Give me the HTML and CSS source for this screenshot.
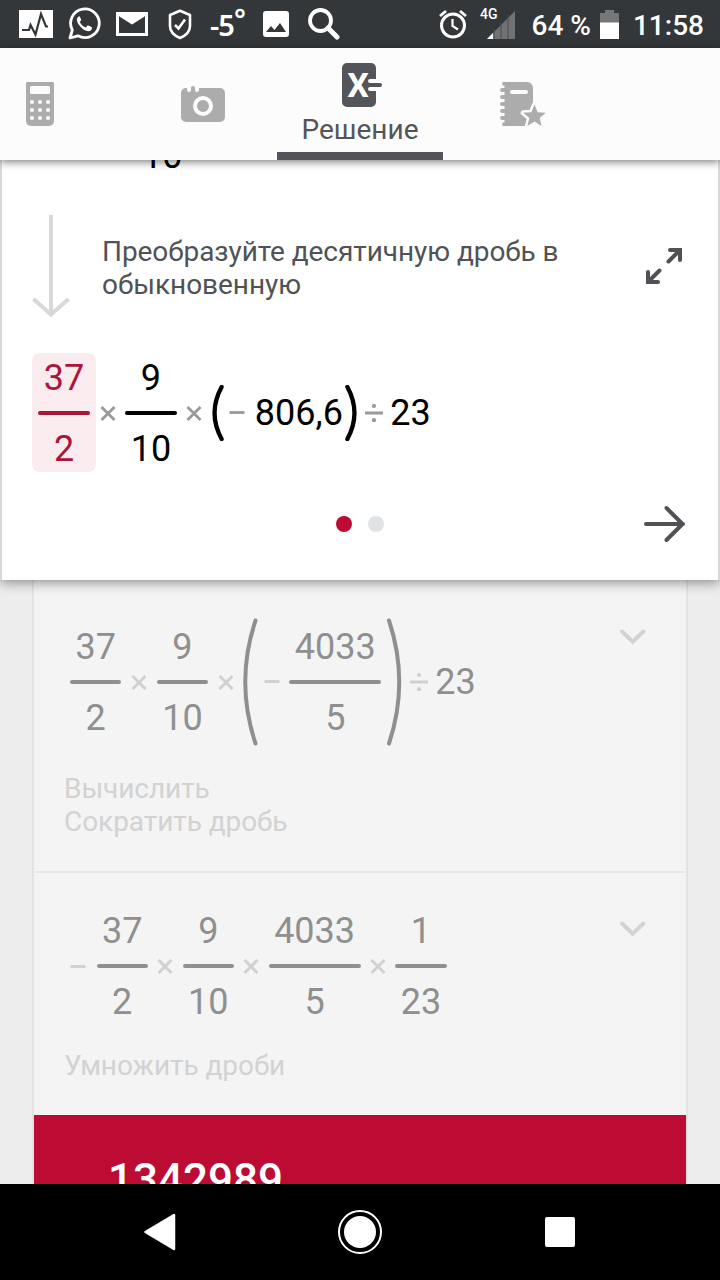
FILE: index.html
```
<!DOCTYPE html>
<html lang="ru">
<head>
  <meta charset="UTF-8">
  <meta name="viewport" content="width=device-width, initial-scale=1.0">
  <title>Решение</title>
  <link rel="stylesheet" href="styles.css">
</head>
<body>
  <!-- Shared math signs -->
  <svg class="defs" width="0" height="0">
    <symbol id="times" viewBox="0 0 16 16"><path d="M1.5 1l13 13M14.5 1l-13 13" stroke="currentColor" stroke-width="2.8"/></symbol>
    <symbol id="minus" viewBox="0 0 16 16"><path d="M.5 7.5h15" stroke="currentColor" stroke-width="2.8"/></symbol>
    <symbol id="divide" viewBox="0 0 18 18"><path d="M0 9h18" stroke="currentColor" stroke-width="3"/><circle cx="9" cy="2" r="2.1" fill="currentColor"/><circle cx="9" cy="16.2" r="2.1" fill="currentColor"/></symbol>
    <symbol id="chevron" viewBox="0 0 26 16"><path d="M2 2.5l10.7 10.3L23.4 2.5" fill="none" stroke="currentColor" stroke-width="4" stroke-linecap="round"/></symbol>
  </svg>

  <div class="status-bar">
    <div class="status-left">
      <svg width="34" height="28" viewBox="0 0 34 28"><path fill="#fff" d="M0 0h34v28H0z"/><path d="M3 20h7l1.500-5 5 9.500L22 4l5 12.500h2" fill="none" stroke="#343739" stroke-width="2.200"/></svg>
      <svg class="icon-phone" width="34" height="34" viewBox="0 0 34 34"><path d="M3 31l2.300-8A14.300 14.300 0 1 1 11 28.800z" fill="none" stroke="#fff" stroke-width="2.800" stroke-linejoin="round"/><path d="M11.500 9.500c-2 1.500-2.500 4.500 1 9 4 5 8.500 7 11.500 4.700 1.300-1.300 1-3 .5-3.200l-3.700-1.800-2 2.300c-3-1.200-4.800-3-6-5.600l1.500-2-1.500-3.400z" fill="#fff"/></svg>
      <svg class="icon-mail" width="32" height="24" viewBox="0 0 32 24"><path d="M1.500 1.500h29v21h-29z" fill="none" stroke="#fff" stroke-width="3"/><path d="M1 0h30v3L16 12.500 1 3z" fill="#fff"/></svg>
      <svg class="icon-shield" width="24" height="31" viewBox="0 0 24 31"><path d="M12 1.800L22 6v11c0 6-4 9.500-10 12C6 26.500 2 23 2 17V6z" fill="none" stroke="#fff" stroke-width="2.600" stroke-linejoin="round"/><path d="M7 16l3.500 3.500 6.500-9" fill="none" stroke="#fff" stroke-width="2.600"/></svg>
      <span class="temp">-5<sup>°</sup></span>
      <svg class="icon-photo" width="26" height="26" viewBox="0 0 26 26"><rect width="26" height="26" rx="3" fill="#fff"/><path d="M3 21l5-6 3.500 4 5.500-7 6 9z" fill="#343739"/></svg>
      <svg class="icon-search" width="32" height="32" viewBox="0 0 32 32"><circle cx="12.500" cy="12.500" r="10.500" fill="none" stroke="#fff" stroke-width="3.800"/><path d="M20 20l9 9" stroke="#fff" stroke-width="5" stroke-linecap="round"/></svg>
    </div>
    <div class="status-right">
      <svg class="icon-alarm" width="28" height="30" viewBox="0 0 28 30"><circle cx="14" cy="16.500" r="11.500" fill="none" stroke="#fff" stroke-width="3"/><path d="M1 7l6-5M27 7l-6-5" stroke="#fff" stroke-width="2.800"/><path d="M13.500 10v7l5.500 3.500" fill="none" stroke="#fff" stroke-width="2.200"/></svg>
      <span class="network">4G</span>
      <svg class="icon-signal" width="28" height="28" viewBox="0 0 28 28"><path d="M28 0v28H0z" fill="#707274"/><path d="M6 22v6H0z" fill="#fff"/><path d="M7 18v10M14 11v17M21 4v24" stroke="#4a4d4f" stroke-width="1"/></svg>
      <span class="battery-text">64 %</span>
      <svg class="icon-battery" width="19" height="29" viewBox="0 0 19 29"><path d="M0 3h5V0h9v3h5v10H0z" fill="#757779"/><path d="M0 12.500h19V29H0z" fill="#fff"/></svg>
      <span class="clock">11:58</span>
    </div>
  </div>

  <div class="tabs">
    <div class="tab">
      <svg width="28" height="44" viewBox="0 0 28 44"><path d="M1 0h26l1 1v38a5 5 0 0 1-5 5H5a5 5 0 0 1-5-5V1z" fill="#acacac"/><rect x="4" y="4" width="20" height="8" rx="1.500" fill="#fcfcfc"/><g fill="#fcfcfc"><circle cx="6" cy="20" r="2"/><circle cx="14" cy="20" r="2"/><circle cx="22" cy="20" r="2"/><circle cx="6" cy="28" r="2"/><circle cx="14" cy="28" r="2"/><circle cx="22" cy="28" r="2"/><circle cx="6" cy="36" r="2"/><circle cx="14" cy="36" r="2"/><circle cx="22" cy="36" r="2"/></g></svg>
    </div>
    <div class="tab tab-camera">
      <svg width="44" height="36" viewBox="0 0 44 36"><path d="M5 2h1v2a2 2 0 0 0 4 0V2a2 2 0 0 1 4 0v2a2 2 0 0 0 4 0V2h21a5 5 0 0 1 5 5v24a5 5 0 0 1-5 5H5a5 5 0 0 1-5-5V7a5 5 0 0 1 5-5z" fill="#acacac"/><circle cx="22" cy="20" r="8" fill="none" stroke="#fcfcfc" stroke-width="4"/></svg>
    </div>
    <div class="tab tab-active">
      <svg width="40" height="44" viewBox="0 0 40 44"><path d="M5 0h24a5 5 0 0 1 5 5v11H28a2 2 0 0 0 0 4h10a2 2 0 0 1 0 4H28a2 2 0 0 0 0 4h6v11a5 5 0 0 1-5 5H5a5 5 0 0 1-5-5V5a5 5 0 0 1 5-5z" fill="#54555a"/><text class="x-mark" x="16" y="34" text-anchor="middle">X</text></svg>
      <span>Решение</span>
    </div>
    <div class="tab tab-notes">
      <svg width="46" height="44" viewBox="0 0 46 44"><path d="M4.500 0H27a6 6 0 0 1 6 6v19l-8 19H4.500z" fill="#acacac"/><path d="M4 1.800h2M2 8h4M2 15h4M2 22h4M2 29h4M2 36h4M4 42.200h2" stroke="#acacac" stroke-width="3.800" stroke-linecap="round"/><rect x="10" y="8" width="18" height="4" rx="2" fill="#fcfcfc"/><path d="M34.500 22.500l3.200 7.700 8.100.6-6.200 5.200 2 8-7.100-4.400-7.100 4.400 2-8-6.200-5.200 8.100-.6z" fill="#acacac" stroke="#fcfcfc" stroke-width="5" stroke-linejoin="round" paint-order="stroke"/></svg>
    </div>
  </div>

  <div class="content">
    <div class="step-open">
      <div class="previous"><span>10</span></div>
      <div class="hint">
        <svg class="arrow-down" width="38" height="103" viewBox="0 0 38 103"><path d="M19 0v99M1.500 84L19 99.500 36.500 84" fill="none" stroke="#d8d8d8" stroke-width="4"/></svg>
        <p>Преобразуйте десятичную дробь в обыкновенную</p>
        <svg class="expand" width="38" height="38" viewBox="0 0 38 38"><path d="M23.500 14.500L33 5M14.500 23.500L5 33" stroke="#505256" stroke-width="4" stroke-linecap="round"/><path d="M25 1h12v12a2 2 0 0 1-4 0V5h-8a2 2 0 0 1 0-4zM1 25a2 2 0 0 1 4 0v8h8a2 2 0 0 1 0 4H1z" fill="#505256"/><path d="M31 3h4v4zM3 31v4h4z" fill="#505256" stroke="#505256" stroke-width="3"/></svg>
      </div>

      <div class="expr expr-main">
        <div class="frac frac-marked"><span>37</span><i></i><span>2</span></div>
        <svg class="sign"><use href="#times"/></svg>
        <div class="frac"><span>9</span><i></i><span>10</span></div>
        <svg class="sign"><use href="#times"/></svg>
        <svg class="paren paren-small" width="13" height="56" viewBox="0 0 13 56"><path d="M9.600 2Q-4.500 28 9.600 54" fill="none" stroke="currentColor" stroke-width="4.300" stroke-linecap="round"/></svg>
        <svg class="sign sign-minus"><use href="#minus"/></svg>
        <span class="number">806,6</span>
        <svg class="paren paren-close" width="13" height="56" viewBox="0 0 13 56"><path d="M3.400 2Q17.500 28 3.400 54" fill="none" stroke="currentColor" stroke-width="4.300" stroke-linecap="round"/></svg>
        <svg class="sign sign-divide"><use href="#divide"/></svg>
        <span class="number">23</span>
      </div>

      <div class="pager">
        <span class="dot dot-active"></span>
        <span class="dot"></span>
        <svg class="next" width="42" height="38" viewBox="0 0 42 38"><path d="M2 19h37M22.500 3l16 16-16 16" fill="none" stroke="#505256" stroke-width="4" stroke-linecap="round" stroke-linejoin="round"/></svg>
      </div>
    </div>

    <div class="steps">
      <div class="step step-first">
        <div class="expr">
          <div class="frac"><span>37</span><i></i><span>2</span></div>
          <svg class="sign"><use href="#times"/></svg>
          <div class="frac"><span>9</span><i></i><span>10</span></div>
          <svg class="sign"><use href="#times"/></svg>
          <svg class="paren paren-left" width="16" height="128" viewBox="0 0 16 128"><path d="M12.500 2.500Q-8 64 12.500 125.500" fill="none" stroke="currentColor" stroke-width="4" stroke-linecap="round"/></svg>
          <svg class="sign sign-minus"><use href="#minus"/></svg>
          <div class="frac"><span>4033</span><i></i><span>5</span></div>
          <svg class="paren paren-right" width="16" height="128" viewBox="0 0 16 128"><path d="M3 2.500Q23.500 64 3 125.500" fill="none" stroke="currentColor" stroke-width="4" stroke-linecap="round"/></svg>
          <svg class="sign sign-divide"><use href="#divide"/></svg>
          <span class="number">23</span>
        </div>
        <svg class="chevron"><use href="#chevron"/></svg>
        <p>Вычислить<br>Сократить дробь</p>
      </div>

      <div class="step step-second">
        <div class="expr">
          <svg class="sign sign-lead"><use href="#minus"/></svg>
          <div class="frac"><span>37</span><i></i><span>2</span></div>
          <svg class="sign"><use href="#times"/></svg>
          <div class="frac"><span>9</span><i></i><span>10</span></div>
          <svg class="sign"><use href="#times"/></svg>
          <div class="frac"><span>4033</span><i></i><span>5</span></div>
          <svg class="sign"><use href="#times"/></svg>
          <div class="frac"><span>1</span><i></i><span>23</span></div>
        </div>
        <svg class="chevron"><use href="#chevron"/></svg>
        <p>Умножить дроби</p>
      </div>

      <div class="result">1342989</div>
    </div>
  </div>

  <div class="nav-bar">
    <svg width="34" height="38" viewBox="0 0 34 38"><path d="M31 2v34L2.500 19z" fill="#fff" stroke="#fff" stroke-width="2.500" stroke-linejoin="round"/></svg>
    <svg width="44" height="44" viewBox="0 0 44 44"><circle cx="22" cy="22" r="21" fill="none" stroke="#fff" stroke-width="2"/><circle cx="22" cy="22" r="16" fill="#fff"/></svg>
    <svg width="30" height="30" viewBox="0 0 30 30"><rect width="30" height="30" rx="2" fill="#fff"/></svg>
  </div>
</body>
</html>
```
FILE: styles.css
```
* {
  box-sizing: border-box;
}

body {
  margin: 0;
  width: 720px;
  height: 1280px;
  display: flex;
  flex-direction: column;
  overflow: hidden;
  font-family: Roboto, sans-serif;
  font-size: 28px;
  background-color: #ededed;
}

svg {
  display: block;
  flex: none;
}

p {
  margin: 0;
  line-height: 33px;
  letter-spacing: -0.06px;
}

.defs {
  position: absolute;
}

/* Status bar */
.status-bar {
  flex: none;
  height: 48px;
  display: flex;
  justify-content: space-between;
  padding: 0 16px 0 19px;
  background-color: #343739;
  color: #fff;
  font-weight: 500;
}

.status-left,
.status-right {
  display: flex;
  align-items: center;
}

.icon-phone {
  margin-left: 14px;
}

.icon-mail {
  margin-left: 15px;
}

.icon-shield {
  margin-left: 20px;
}

.temp {
  width: 35px;
  margin-left: 18px;
  padding-top: 2px;
  font-family: "Noto Sans", sans-serif;
  font-size: 29px;
  font-weight: 600;
  line-height: 46px;
  letter-spacing: -1px;
  white-space: nowrap;
}

.temp sup {
  font-size: 28px;
  line-height: 0;
  vertical-align: 6px;
}

.icon-photo {
  margin-left: 18px;
}

.icon-search {
  margin-left: 19px;
}

.network {
  margin-left: 13px;
  align-self: flex-start;
  padding-top: 6px;
  font-size: 14px;
  line-height: 17px;
}

.icon-signal {
  margin-left: -11px;
  margin-top: 1px;
}

.battery-text {
  margin-left: 17px;
  padding-top: 3px;
}

.icon-battery {
  margin-left: 9px;
}

.clock {
  margin-left: 14px;
  padding-top: 3px;
}

/* Tabs */
.tabs {
  flex: none;
  height: 112px;
  display: flex;
  position: relative;
  z-index: 2;
  background-color: #fcfcfc;
  box-shadow: 0 2px 8px rgba(0, 0, 0, 0.5);
}

.tab {
  width: 129px;
  padding: 34px 0 0 26px;
}

.tab-camera {
  width: 148px;
  padding: 38px 0 0 52px;
}

.tab-active {
  width: 166px;
  padding: 15px 0 0;
  display: flex;
  flex-direction: column;
  align-items: center;
  border-bottom: 8px solid #54555a;
  color: #54555a;
  line-height: 33px;
}

.tab-active svg {
  margin-left: 4px;
  margin-bottom: 6px;
}

.tab-notes {
  padding-left: 57px;
}

.x-mark {
  font-size: 34px;
  font-weight: 700;
  fill: #fff;
}

/* Expanded step */
.content {
  flex: 1;
  min-height: 0;
  overflow: hidden;
}

.step-open {
  height: 420px;
  position: relative;
  z-index: 1;
  background-color: #fff;
  border: 2px solid #d8d8d8;
  border-top: none;
  border-bottom: none;
  box-shadow: 0 2px 12px rgba(0, 0, 0, 0.45);
}

.previous {
  height: 55px;
  padding-left: 140px;
  font-size: 36px;
  line-height: 42px;
}

.previous span {
  display: block;
  margin-top: -25px;
  float: left;
}

.hint {
  height: 134px;
  display: flex;
  align-items: flex-start;
  padding: 0 35px 0 30px;
  color: #505256;
}

.hint p {
  flex: 1;
  margin: 20px 20px 0 32px;
}

.expand {
  margin-top: 32px;
}

.expr {
  display: flex;
  align-items: center;
  font-size: 36px;
  line-height: 42px;
  color: #8f8f8f;
}

.expr-main {
  height: 128px;
  padding-left: 30px;
  color: #000;
}

.frac {
  display: flex;
  flex-direction: column;
  align-items: center;
}

.frac span {
  padding: 0 5.5px;
}

.frac i {
  width: 100%;
  height: 4px;
  margin: 12px 0 13px;
  border-radius: 2px;
  background-color: currentColor;
}

.expr-main .frac {
  margin-top: 1px;
}

.expr-main .frac-marked {
  width: 64px;
  height: 119px;
  padding: 4px 6px 2px;
  margin-top: -1px;
  margin-right: -6px;
  border-radius: 8px;
  background-color: #faebee;
  color: #a9163a;
}

.sign {
  width: 16px;
  height: 16px;
  margin: 1px 9.6px 0;
  color: #d0d0d0;
}

.expr-main .sign {
  color: #999;
}

.expr .sign-minus {
  margin: 0 9.5px 0 4.500px;
}

.expr .sign-divide {
  width: 18px;
  height: 18px;
  margin: 0 7.5px 0 8px;
}

.expr .sign-lead {
  margin-right: 10.5px;
  margin-left: 0;
  margin-top: 0;
}

.paren-close {
  margin-left: 1px;
}

.paren-right {
  margin-left: 4.5px;
}

.pager {
  height: 94px;
  display: flex;
  justify-content: center;
  align-items: center;
  gap: 16px;
  position: relative;
}

.dot {
  width: 16px;
  height: 16px;
  border-radius: 50%;
  background-color: #e2e3e5;
}

.dot-active {
  background-color: #bd0c33;
}

.next {
  position: absolute;
  right: 32px;
}

/* Collapsed steps */
.steps {
  width: 656px;
  margin: 0 auto;
  border: 2px solid #e3e3e3;
  border-top: none;
  border-bottom: none;
  background-color: #f4f4f4;
}

.step {
  display: grid;
  grid-template-columns: 1fr 26px;
  align-content: start;
  padding-left: 36px;
  padding-right: 40px;
}

.step-first {
  height: 293px;
  padding-top: 38px;
  border-bottom: 2px solid #e8e8e8;
}

.step-second {
  height: 242px;
  padding-top: 37px;
}

.step p {
  grid-column: 1 / -1;
  margin-left: -6px;
  color: #d2d2d2;
}

.step-first p,
.step-second p {
  margin-top: 26px;
}

.step-second .sign {
  margin-left: 9.3px;
  margin-right: 9.3px;
}

.step-second .sign-lead {
  margin-left: 0;
  margin-right: 10.5px;
}

.chevron {
  width: 26px;
  height: 16px;
  margin-top: 11px;
  color: #d3d3d3;
}

.result {
  height: 160px;
  padding: 39px 0 0 74px;
  background-color: #bd0c33;
  color: #fff;
  font-size: 44px;
  font-weight: 500;
  line-height: 52px;
}

/* Navigation bar */
.nav-bar {
  flex: none;
  height: 96px;
  display: grid;
  grid-template-columns: repeat(3, 200px);
  justify-content: center;
  align-items: center;
  justify-items: center;
  position: relative;
  z-index: 2;
  background-color: #000;
}
```
